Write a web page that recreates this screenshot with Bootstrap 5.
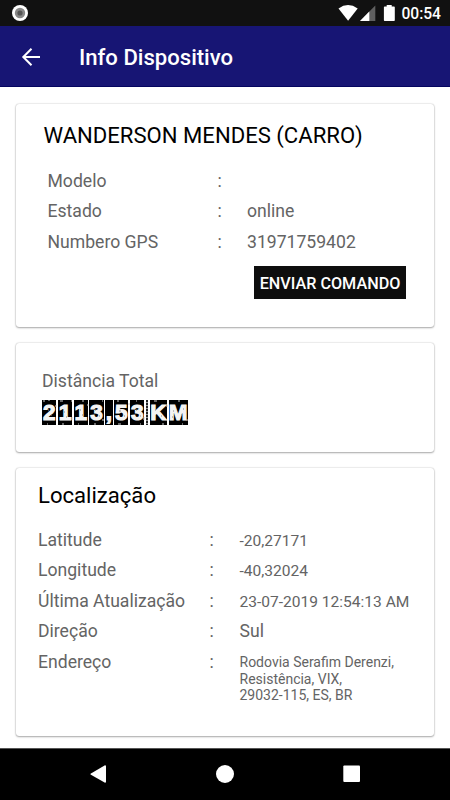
<!DOCTYPE html>
<html lang="pt-BR">
<head>
<meta charset="utf-8">
<meta name="viewport" content="width=device-width, initial-scale=1">
<title>Info Dispositivo</title>
<link href="https://cdn.jsdelivr.net/npm/bootstrap@5.3.0/dist/css/bootstrap.min.css" rel="stylesheet">
<style>
body{font-family:Roboto,"Liberation Sans",sans-serif;height:800px;overflow:hidden;color:#646464;font-size:17.6px;line-height:20px}
.status{height:26px;background:#111;padding:0 9px 0 11px}
.clock{font-size:15.6px;font-weight:500;line-height:26px;margin-left:3px;padding-top:2px}
.appbar{height:61px;background:#171574;border-bottom:1px solid #05055f;padding:2px 0 0 21px}
.appbar h1{font-size:22.1px;font-weight:500;margin-left:38px}
.stack{padding-top:17px}
.panel{border-radius:3px;border:0;box-shadow:0 0 1.5px rgba(0,0,0,.3),0 1px 2px rgba(0,0,0,.3)}
.panel h2{font-size:22.1px;line-height:26px;font-weight:400;color:#000}
.p-device{height:223px;padding:18px 28px 0 27.5px}
.p-distance{height:109px;padding:28px 26px 0}
.p-place{height:268px;padding:14px 22px 0}
.line{height:30.4px}
.rows{padding-top:6px}
.p-device .rows{padding:7px 0 0 4px}
.c-label{width:170px}
.c-colon{width:29.5px}
.p-place .c-label{width:171.5px}
.p-place .c-colon{width:30px}
.v-sm{font-size:15.55px;padding-top:1px}
.v-addr{font-size:14px;line-height:16.7px;padding-top:2.5px}
.btn-cmd{background:#0e0e0e;color:#fff;border-radius:0;font-size:16.2px;font-weight:500;width:152px;height:33px;line-height:34px;margin-top:4px}
.odo{height:25px;gap:1.5px;margin-top:9px}
.tile{background:#000;color:#f4f4f4;font:900 22.500px/26px "Liberation Sans",sans-serif;width:14.3px;-webkit-text-stroke:1.2px #f4f4f4;overflow:hidden}
.tile.t-comma{width:7.5px}
.tile.t-gap{width:2.5px;background:repeating-linear-gradient(#222 0 2px,#999 2px 3px)}
.tile.t-k{width:17.3px}
.tile.t-m{width:19px}
.grit{left:0;top:0}
.softkeys{height:52px;background:#000;border-top:1px solid #555}
</style>
<script src="https://cdn.jsdelivr.net/npm/bootstrap@5.3.0/dist/js/bootstrap.bundle.min.js"></script>
</head>
<body class="d-flex flex-column bg-white">
<div class="status d-flex align-items-center text-white flex-shrink-0">
  <svg width="18" height="18" viewBox="0 0 18 18"><circle cx="9" cy="9" r="8" fill="#fff"/><circle cx="9" cy="9" r="5.2" fill="#888"/><circle cx="9" cy="9" r="2.6" fill="#555"/></svg>
  <svg class="ms-auto" width="60" height="18" viewBox="0 0 60 18"><path d="M.5 4.400Q10 -2.200 19.700 4.400L10.100 16.700Z" fill="#fff"/><path d="M37.300 1.600V17H22Z" fill="#606060"/><path d="M31.300 7.600V17H22Z" fill="#fff"/><path d="M48.700 1h5v1.500h2.300q.8 0 .8.800v12.900q0 .8-.8.800h-9.300q-.8 0-.8-.8V3.300q0-.8.800-.8h2z" fill="#fff"/></svg>
  <span class="clock">00:54</span>
</div>
<header class="appbar d-flex align-items-center text-white flex-shrink-0">
  <svg width="20" height="20" viewBox="0 0 20 20" fill="none" stroke="#fff" stroke-width="2"><path d="M19 10H2.500M10.500 1.800L2.300 10l8.200 8.200"/></svg>
  <h1 class="mb-0">Info Dispositivo</h1>
</header>
<main class="stack d-flex flex-column gap-3 flex-grow-1 px-3">
  <section class="card panel p-device flex-shrink-0">
    <h2 class="mb-0 text-nowrap">WANDERSON MENDES (CARRO)</h2>
    <div class="rows mt-3">
      <div class="line d-flex"><span class="c-label">Modelo</span><span class="c-colon">:</span></div>
      <div class="line d-flex"><span class="c-label">Estado</span><span class="c-colon">:</span><span>online</span></div>
      <div class="line d-flex"><span class="c-label">Numbero GPS</span><span class="c-colon">:</span><span>31971759402</span></div>
    </div>
    <button class="btn btn-cmd p-0 ms-auto text-nowrap">ENVIAR COMANDO</button>
  </section>
  <section class="card panel p-distance flex-shrink-0">
    <div>Distância Total</div>
    <div class="odo d-flex text-center position-relative">
      <span class="tile">2</span><span class="tile">1</span><span class="tile">1</span><span class="tile">3</span><span class="tile t-comma">,</span><span class="tile">5</span><span class="tile">3</span><span class="tile t-gap"></span><span class="tile t-k">K</span><span class="tile t-m">M</span>
      <svg class="grit position-absolute" width="147" height="25" viewBox="0 0 147 25" fill="none"><path d="M1 1h2M7 0v1M18 1h3M29 1h1M41 0v2M60 1h1M75 1h2M94 1h1M112 1h3M136 1h2M5 24h1M20 24h2M36 24h1M52 24h2M76 24h3M98 24h1M120 24h2M140 24h1M14 5v2M30 17v3M46 4v2M61 19v2M87 3v2M102 17v3M125 5v2M145 19v2" stroke="#ccc"/><path d="M6 10h1M9 15h1M22 12h1M24 17h1M38 10h1M40 15h1M53 10h1M57 16h1M77 11h2M82 16h1M94 10h1M98 16h1M113 10h1M119 16h1M131 11h1M139 15h1M130 17h1M141 9h1" stroke="#888"/></svg>
    </div>
  </section>
  <section class="card panel p-place flex-shrink-0">
    <h2 class="mb-0">Localização</h2>
    <div class="rows mt-3">
      <div class="line d-flex"><span class="c-label">Latitude</span><span class="c-colon">:</span><span class="v-sm">-20,27171</span></div>
      <div class="line d-flex"><span class="c-label">Longitude</span><span class="c-colon">:</span><span class="v-sm">-40,32024</span></div>
      <div class="line d-flex"><span class="c-label">Última Atualização</span><span class="c-colon">:</span><span class="v-sm text-nowrap">23-07-2019 12:54:13 AM</span></div>
      <div class="line d-flex"><span class="c-label">Direção</span><span class="c-colon">:</span><span>Sul</span></div>
      <div class="line d-flex"><span class="c-label">Endereço</span><span class="c-colon">:</span><span class="v-addr text-nowrap">Rodovia Serafim Derenzi,<br>Resistência, VIX,<br>29032-115, ES, BR</span></div>
    </div>
  </section>
</main>
<nav class="softkeys flex-shrink-0">
  <svg class="d-block" width="450" height="51" viewBox="0 749 450 51" fill="#fff"><path d="M90.500 773.700L105 765.300q1 0 1 1v15.400q0 1-1 1L90.500 774.500z"/><circle cx="225" cy="774" r="9"/><rect x="343.300" y="765.500" width="16.700" height="16.500" rx="1"/></svg>
</nav>
</body>
</html>
